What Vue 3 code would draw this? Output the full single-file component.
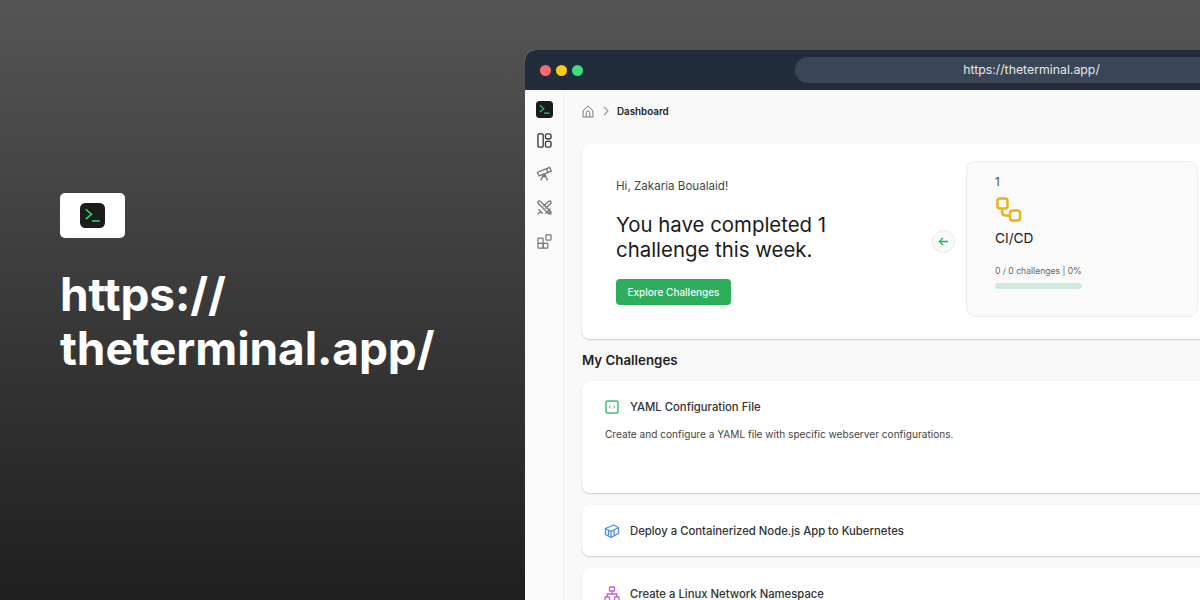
<template>
  <div class="page">
    <section class="intro">
      <div class="logo-box">
        <svg width="25" height="25" viewBox="0 0 24 24">
          <rect width="24" height="24" rx="5" fill="#1c1c1c" />
          <path d="M5.500 6 11 10.800l-5.500 4.700M11.500 17.200H19" fill="none" stroke="#22e36b" stroke-width="1.500" />
        </svg>
      </div>
      <h1>https://<br />theterminal.app/</h1>
    </section>

    <section class="window">
      <header class="titlebar">
        <span class="dot red"></span>
        <span class="dot yellow"></span>
        <span class="dot green"></span>
        <div class="url">https://theterminal.app/</div>
      </header>

      <div class="body">
        <aside class="sidebar">
          <svg class="brand" width="17" height="17" viewBox="0 0 24 24">
            <rect width="24" height="24" rx="5" fill="#1c1c1c" />
            <path d="M5.500 6 11 10.800l-5.500 4.700M11.500 17.200H19" fill="none" stroke="#22d566" stroke-width="1.700" />
          </svg>
          <svg class="dark" width="15" height="15" viewBox="0 0 16 16" fill="none" stroke="currentColor" stroke-width="1.400">
            <rect x="1" y="1" width="5.600" height="14" rx="1.200" />
            <rect x="9" y="1" width="6" height="5.400" rx="1.800" />
            <rect x="9" y="9" width="6" height="6" rx="1.800" />
          </svg>
          <svg width="17" height="17" viewBox="0 0 24 24" fill="none" stroke="currentColor" stroke-width="1.900" stroke-linejoin="round" stroke-linecap="round">
            <path d="M2 10.500 19.500 3.500l2 5-17 7z" />
            <path d="M15 5.500l2 5M10.500 14 7 21M12.500 13.500 16 21M11.500 14v3" />
          </svg>
          <svg width="17" height="17" viewBox="0 0 24 24" fill="none" stroke="currentColor" stroke-width="1.900" stroke-linecap="round" stroke-linejoin="round">
            <path d="M3 3h3l15 15v3h-3L3 6zM21 3h-3l-7 7M21 3v3l-7 7M4 15l5 5M6.500 17.500 3 21M14 20l6-6M17.500 17.500 21 21" />
          </svg>
          <svg class="blocks" width="15" height="15" viewBox="0 0 16 16" fill="none" stroke="currentColor" stroke-width="1.300">
            <rect x="1" y="4.500" width="5.500" height="5.500" rx=".6" />
            <rect x="1" y="10" width="5.500" height="5" rx=".6" />
            <rect x="6.500" y="10" width="5" height="5" rx=".6" />
            <rect x="9.500" y="1" width="5.500" height="5.500" rx=".8" />
          </svg>
        </aside>

        <main class="main">
          <nav class="crumbs">
            <svg width="12" height="13" viewBox="0 0 24 26" fill="none" stroke="#777" stroke-width="2" stroke-linejoin="round">
              <path d="M2 11.500 12 2l10 9.500V24H2zM8.500 24v-8.500a3.500 3.500 0 0 1 7 0V24" />
            </svg>
            <svg width="8" height="10" viewBox="0 0 8 10" fill="none" stroke="#999" stroke-width="1.100">
              <path d="M2 1l4 4-4 4" />
            </svg>
            <b>Dashboard</b>
          </nav>

          <div class="hero card">
            <div class="hero-text">
              <p class="hi">Hi, Zakaria Boualaid!</p>
              <h2>You have completed 1<br />challenge this week.</h2>
              <button class="explore">Explore Challenges</button>
            </div>
            <div class="back">
              <svg width="11" height="11" viewBox="0 0 12 12" fill="none" stroke="#2eae5d" stroke-width="1.400">
                <path d="M11 6H1.500M5.500 2 1.500 6l4 4" />
              </svg>
            </div>
            <div class="track">
              <span class="num">1</span>
              <svg class="cicd" width="26" height="26" viewBox="0 0 26 26" fill="none" stroke="#e6b418" stroke-width="2.500">
                <rect x="1.500" y="1.500" width="10" height="10" rx="2.500" />
                <rect x="14" y="13.500" width="10" height="10" rx="2.500" />
                <path d="M6 11.500v3c0 2.500 1.500 4 4 4h4" />
              </svg>
              <h3>CI/CD</h3>
              <p class="progress-label">0 / 0 challenges | 0%</p>
              <div class="bar"></div>
            </div>
          </div>

          <h4>My Challenges</h4>

          <div class="card row tall">
            <div class="row-head">
              <svg width="14" height="14" viewBox="0 0 14 14" fill="none" stroke="#3ebd78">
                <rect x="1" y="1" width="12" height="12" rx="1.500" stroke-width="1.500" />
                <path d="M5.800 5.500 4.300 7l1.500 1.500M8.200 5.500 9.700 7 8.200 8.500" stroke-width="1" />
              </svg>
              <span>YAML Configuration File</span>
            </div>
            <p class="desc">Create and configure a YAML file with specific webserver configurations.</p>
          </div>

          <div class="card row">
            <div class="row-head">
              <svg class="wide" width="16" height="16" viewBox="0 0 16 16" fill="none" stroke="#4a8fe0" stroke-width="1.300" stroke-linejoin="round">
                <path d="M1.500 5.500 9.500 2l5 2.500v6L7 14.500l-5.500-3z" />
                <path d="M1.500 5.500 7 8.500l7.500-4M7 8.500v6M4.500 7v5.500M10 6.500v6" />
              </svg>
              <span>Deploy a Containerized Node.js App to Kubernetes</span>
            </div>
          </div>

          <div class="card row">
            <div class="row-head">
              <svg class="wide" width="16" height="16" viewBox="0 0 16 16" fill="none" stroke="#c05fd6" stroke-width="1.300">
                <rect x="5.500" y="1" width="5" height="4" rx=".6" />
                <rect x="1" y="11" width="4.500" height="4" rx=".6" />
                <rect x="10.500" y="11" width="4.500" height="4" rx=".6" />
                <path d="M8 5v3M3.200 11V8h9.600v3" />
              </svg>
              <span>Create a Linux Network Namespace</span>
            </div>
          </div>
        </main>
      </div>
    </section>
  </div>
</template>

<script setup>
</script>

<style>
html, body {
  margin: 0;
  overflow: hidden;
}
</style>

<style scoped>
.page {
  width: 1200px;
  height: 600px;
  overflow: hidden;
  display: flex;
  background: linear-gradient(180deg, #555555 0%, #1f1f1f 100%);
  font-family: Inter, "Liberation Sans", sans-serif;
}

.intro {
  flex: 0 0 525px;
  box-sizing: border-box;
  padding: 193px 0 0 60px;
}

.logo-box {
  width: 65px;
  height: 45px;
  border-radius: 5px;
  background: #fff;
  display: flex;
  align-items: center;
  justify-content: center;
}

h1 {
  margin: 29px 0 0;
  color: #fff;
  font-size: 46px;
  line-height: 54px;
  font-weight: 700;
  letter-spacing: -0.1px;
}

.window {
  flex: 0 0 743px;
  margin-top: 50px;
  border-radius: 10px 0 0 0;
  overflow: hidden;
  background: #f9f9f9;
}

.titlebar {
  height: 40px;
  background: #212c3c;
  display: flex;
  align-items: center;
  padding-left: 15px;
  gap: 5px;
}

.dot {
  width: 11px;
  height: 11px;
  border-radius: 50%;
}

.red { background: #f96b6f; }
.yellow { background: #fdcb14; }
.green { background: #3fdc82; }

.url {
  margin-left: 207px;
  flex: 1;
  height: 26px;
  border-radius: 13px 0 0 13px;
  background: #3a4557;
  color: #e6e8eb;
  font-size: 12.300px;
  line-height: 26px;
  text-align: center;
}

.body {
  display: flex;
  height: 510px;
}

.sidebar {
  flex: 0 0 39px;
  background: #fafafa;
  border-right: 1px solid #eeeeee;
  box-sizing: border-box;
  display: flex;
  flex-direction: column;
  align-items: center;
  padding-top: 11px;
  gap: 17px;
  color: #777;
}

.sidebar .brand {
  margin-bottom: -2px;
}

.sidebar .dark {
  color: #333;
}

.sidebar .blocks {
  margin-top: 1px;
}

.main {
  flex: 1;
  padding-left: 18px;
  min-width: 0;
}

.crumbs {
  height: 42px;
  display: flex;
  align-items: center;
  gap: 8px;
  font-size: 9.800px;
  color: #1f1f1f;
}

.crumbs b {
  font-weight: 600;
  margin-left: -1px;
}

.card {
  width: 640px;
  background: #fff;
  border-radius: 8px;
  box-shadow: 0 1px 2px rgba(0, 0, 0, 0.18);
}

.hero {
  margin-top: 12px;
  height: 195px;
  display: flex;
  align-items: center;
  box-sizing: border-box;
  padding-left: 34px;
}

.hero-text {
  width: 316px;
}

.hi {
  margin: 0;
  font-size: 11.600px;
  color: #444;
}

h2 {
  margin: 19px 0 0;
  font-size: 20.400px;
  line-height: 25px;
  font-weight: 400;
  color: #1a1a1a;
}

.explore {
  display: block;
  margin-top: 17px;
  width: 115px;
  height: 26px;
  padding: 0;
  border: 0;
  border-radius: 4px;
  background: #2eae5d;
  color: #f4fbf6;
  font-family: inherit;
  font-size: 10px;
  font-weight: 500;
}

.back {
  width: 21px;
  height: 21px;
  border-radius: 50%;
  border: 1px solid #e8e8e8;
  background: #fafafa;
  display: flex;
  align-items: center;
  justify-content: center;
  flex: none;
}

.track {
  margin: -5px 0 0 11px;
  width: 232px;
  height: 156px;
  box-sizing: border-box;
  flex: none;
  padding: 14px 0 0 28px;
  border: 1px solid #efefef;
  border-radius: 9px;
  background: #fafafa;
}

.num {
  display: block;
  font-size: 11.500px;
  line-height: 13px;
  color: #444;
}

.cicd {
  display: block;
  margin: 8px 0 0 1px;
}

h3 {
  margin: 7px 0 0;
  font-size: 13.700px;
  line-height: 17px;
  font-weight: 400;
  color: #1a1a1a;
}

.progress-label {
  margin: 19px 0 0;
  font-size: 8.600px;
  line-height: 11px;
  color: #666;
}

.bar {
  margin-top: 6px;
  width: 87px;
  height: 6px;
  border-radius: 3px;
  background: #cfe9da;
}

h4 {
  margin: 13px 0 0;
  font-size: 13.300px;
  line-height: 17px;
  font-weight: 600;
  color: #1f1f1f;
}

.row {
  margin-top: 12px;
  height: 51px;
  box-sizing: border-box;
  padding: 0 23px;
}

.row.tall {
  height: 112px;
}

.row-head {
  height: 51px;
  display: flex;
  align-items: center;
  gap: 11px;
  font-size: 11.300px;
  font-weight: 500;
  color: #333;
}

.row.tall .row-head {
  height: 52px;
}

.row-head .wide {
  margin: 0 -1px;
}

.desc {
  margin: -6px 0 0;
  font-size: 10.100px;
  line-height: 14px;
  color: #444;
}
</style>
